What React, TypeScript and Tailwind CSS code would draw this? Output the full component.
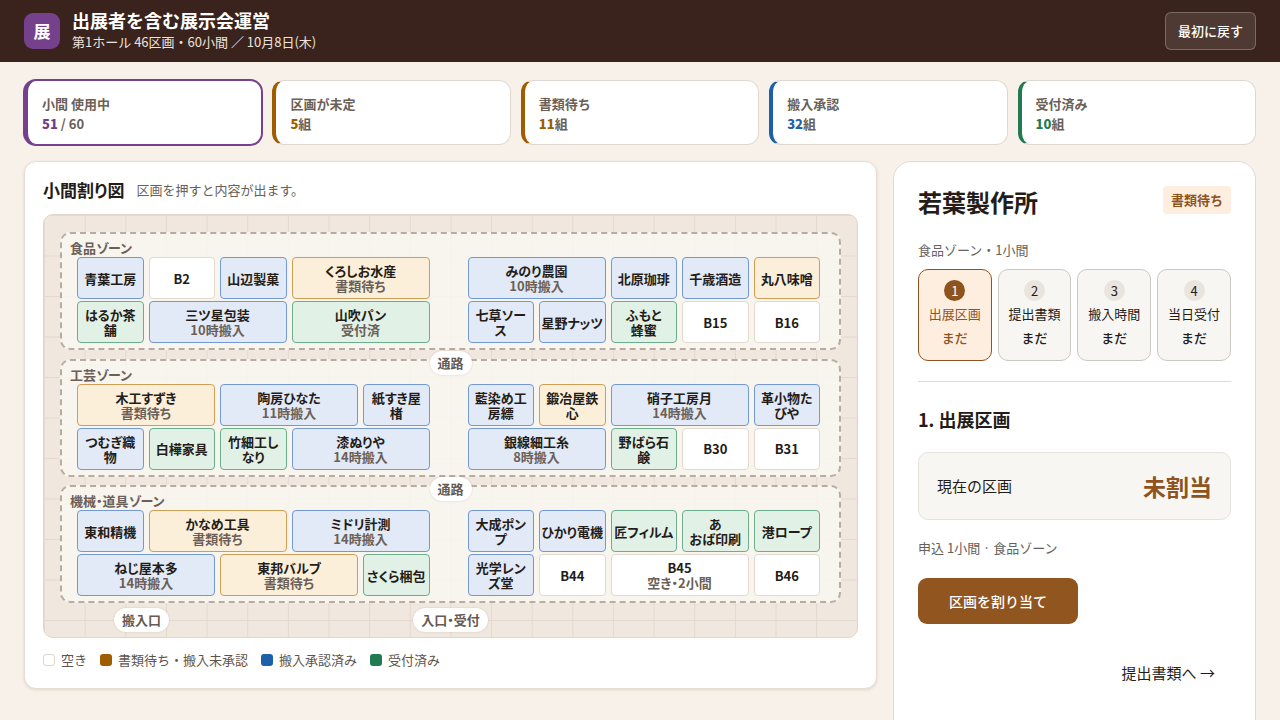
import { clsx } from 'clsx';

type Status = 'free' | 'wait' | 'ok' | 'done';
type Booth = { name: string; note?: string; status: Status; span?: number };
type Zone = { name: string; left: Booth[]; right: Booth[] };

const summary = [
  { label: '小間 使用中', num: '51', unit: ' / 60', bar: 'border-l-[#75408c]', text: 'text-[#6f3d8a]', active: true },
  { label: '区画が未定', num: '5', unit: '組', bar: 'border-l-[#a05c00]', text: 'text-[#a05c00]' },
  { label: '書類待ち', num: '11', unit: '組', bar: 'border-l-[#a05c00]', text: 'text-[#a05c00]' },
  { label: '搬入承認', num: '32', unit: '組', bar: 'border-l-[#1d5fa8]', text: 'text-[#1d5fa8]' },
  { label: '受付済み', num: '10', unit: '組', bar: 'border-l-[#217a50]', text: 'text-[#217a50]' },
];

const zones: Zone[] = [
  {
    name: '食品ゾーン',
    left: [
      { name: '青葉工房', status: 'ok' },
      { name: 'B2', status: 'free' },
      { name: '山辺製菓', status: 'ok' },
      { name: 'くろしお水産', note: '書類待ち', status: 'wait', span: 2 },
      { name: 'はるか茶\n舗', status: 'done' },
      { name: '三ツ星包装', note: '10時搬入', status: 'ok', span: 2 },
      { name: '山吹パン', note: '受付済', status: 'done', span: 2 },
    ],
    right: [
      { name: 'みのり農園', note: '10時搬入', status: 'ok', span: 2 },
      { name: '北原珈琲', status: 'ok' },
      { name: '千歳酒造', status: 'ok' },
      { name: '丸八味噌', status: 'wait' },
      { name: '七草ソー\nス', status: 'ok' },
      { name: '星野ナッツ', status: 'ok' },
      { name: 'ふもと\n蜂蜜', status: 'done' },
      { name: 'B15', status: 'free' },
      { name: 'B16', status: 'free' },
    ],
  },
  {
    name: '工芸ゾーン',
    left: [
      { name: '木工すずき', note: '書類待ち', status: 'wait', span: 2 },
      { name: '陶房ひなた', note: '11時搬入', status: 'ok', span: 2 },
      { name: '紙すき屋\n楮', status: 'ok' },
      { name: 'つむぎ織\n物', status: 'ok' },
      { name: '白樺家具', status: 'done' },
      { name: '竹細工し\nなり', status: 'done' },
      { name: '漆ぬりや', note: '14時搬入', status: 'ok', span: 2 },
    ],
    right: [
      { name: '藍染め工\n房縹', status: 'ok' },
      { name: '鍛冶屋鉄\n心', status: 'wait' },
      { name: '硝子工房月', note: '14時搬入', status: 'ok', span: 2 },
      { name: '革小物た\nびや', status: 'ok' },
      { name: '銀線細工糸', note: '8時搬入', status: 'ok', span: 2 },
      { name: '野ばら石\n鹸', status: 'done' },
      { name: 'B30', status: 'free' },
      { name: 'B31', status: 'free' },
    ],
  },
  {
    name: '機械・道具ゾーン',
    left: [
      { name: '東和精機', status: 'ok' },
      { name: 'かなめ工具', note: '書類待ち', status: 'wait', span: 2 },
      { name: 'ミドリ計測', note: '14時搬入', status: 'ok', span: 2 },
      { name: 'ねじ屋本多', note: '14時搬入', status: 'ok', span: 2 },
      { name: '東邦バルブ', note: '書類待ち', status: 'wait', span: 2 },
      { name: 'さくら梱包', status: 'done' },
    ],
    right: [
      { name: '大成ポン\nプ', status: 'ok' },
      { name: 'ひかり電機', status: 'ok' },
      { name: '匠フィルム', status: 'done' },
      { name: 'あ\nおば印刷', status: 'done' },
      { name: '港ロープ', status: 'done' },
      { name: '光学レン\nズ堂', status: 'ok' },
      { name: 'B44', status: 'free' },
      { name: 'B45', note: '空き・2小間', status: 'free', span: 2 },
      { name: 'B46', status: 'free' },
    ],
  },
];

const boothColor: Record<Status, string> = {
  free: 'bg-white border-[#e3d9cf]',
  wait: 'bg-[#fcefd9] border-[#cf9f56]',
  ok: 'bg-[#e2eaf7] border-[#7299d2]',
  done: 'bg-[#e1f1e6] border-[#6aae8b]',
};

const legend = [
  { label: '空き', color: 'bg-white border border-[#ddd5cc]' },
  { label: '書類待ち・搬入未承認', color: 'bg-[#a05c00]' },
  { label: '搬入承認済み', color: 'bg-[#1d5fa8]' },
  { label: '受付済み', color: 'bg-[#217a50]' },
];

const steps = ['出展区画', '提出書類', '搬入時間', '当日受付'];

// booth names and zone labels are set tight so five characters fit one booth
function BoothGrid({ booths }: { booths: Booth[] }) {
  return (
    <div className="grid flex-1 grid-cols-5 auto-rows-[42px] gap-x-[5px] gap-y-[2px]">
      {booths.map((b) => (
        <button
          key={b.name}
          type="button"
          className={clsx(
            'flex flex-col items-center justify-center rounded-[4px] border text-[13px] leading-[15px] font-bold whitespace-pre text-[#241c18]',
            boothColor[b.status],
            b.span === 2 && 'col-span-2',
          )}
        >
          <span>{b.name}</span>
          {b.note && <span className="text-[#6b5f57]">{b.note}</span>}
        </button>
      ))}
    </div>
  );
}

function Pill({ children, className }: { children: string; className?: string }) {
  return (
    <span className={clsx('rounded-full bg-white px-2 text-[13px] leading-6 font-bold whitespace-nowrap text-[#665a52] shadow-[0_0_2px_rgba(80,50,30,0.2)]', className)}>
      {children}
    </span>
  );
}

function FloorMap() {
  return (
    <div className="rounded-[10px] border border-[#e3d6c8] bg-[#f0e7de] bg-[linear-gradient(90deg,#e4d9ce_1px,transparent_1px),linear-gradient(#e4d9ce_1px,transparent_1px)] bg-size-[5%_9.6%] px-4 pt-[17px] pb-[5px] [font-feature-settings:'palt']">
      <div className="grid h-[371px] content-between">
        {zones.map((zone, i) => (
          <section key={zone.name} className="relative rounded-[10px] border-2 border-dashed border-[#b8aca2] bg-[#f9f6f1]/85 px-2 pt-[5px] pb-[5px]">
            {i > 0 && <Pill className="absolute -top-[10px] left-1/2 -translate-x-1/2">通路</Pill>}
            <h3 className="text-[13px] leading-[18px] font-bold text-[#6b5f57]">{zone.name}</h3>
            <div className="flex gap-[38px] pr-[11px] pl-[7px]">
              <BoothGrid booths={zone.left} />
              <BoothGrid booths={zone.right} />
            </div>
          </section>
        ))}
      </div>
      <div className="mt-[5px] grid grid-cols-[1fr_auto_1fr]">
        <div className="flex pl-[54px]">
          <Pill>搬入口</Pill>
        </div>
        <Pill>入口・受付</Pill>
      </div>
    </div>
  );
}

function DetailPanel() {
  return (
    <aside className="min-h-[640px] rounded-[18px] border border-[#dedad4] bg-white p-6">
      <div className="flex items-start justify-between">
        <h2 className="text-2xl leading-8 font-bold">若葉製作所</h2>
        <span className="rounded-[4px] bg-[#fdeee0] px-2 text-[13px] leading-7 font-bold text-[#8f531d]">書類待ち</span>
      </div>
      <p className="mt-[22px] text-[13px] leading-5 text-[#67645f]">食品ゾーン・1小間</p>
      <div className="mt-[9px] grid grid-cols-4 gap-[6px]">
        {steps.map((step, i) => (
          <button
            key={step}
            type="button"
            className={clsx(
              'flex flex-col items-center rounded-[10px] border py-[10px] text-[13px] leading-6',
              i === 0 ? 'border-[#8f531d] bg-[#fdeee0] text-[#8f531d]' : 'border-[#cbc8c2] bg-[#f8f6f3] text-[#241c18]',
            )}
          >
            <span className={clsx('mb-px size-[21px] rounded-full leading-[21px]', i === 0 ? 'bg-[#8f531d] text-white' : 'bg-[#e9e4de]')}>{i + 1}</span>
            <span>{step}</span>
            <span className="font-medium">まだ</span>
          </button>
        ))}
      </div>
      <div className="mt-5 border-t border-[#dedad4] pt-6">
        <h3 className="text-lg leading-[26px] font-bold">1. 出展区画</h3>
        <div className="mt-5 flex h-[68px] items-center justify-between rounded-[10px] border border-[#e6e2dd] bg-[#f8f6f3] px-[18px]">
          <span className="text-[15px]">現在の区画</span>
          <strong className="text-[23px] font-bold text-[#8f531d]">未割当</strong>
        </div>
        <p className="mt-[18px] text-[13px] leading-5 text-[#67605a]">申込 1小間 · 食品ゾーン</p>
        <button type="button" className="mt-5 h-[46px] w-40 rounded-[9px] bg-[#91561f] text-sm font-medium text-white">
          区画を割り当て
        </button>
        <div className="mt-[26px] flex justify-end">
          <button type="button" className="h-[46px] px-4 text-[15px]">提出書類へ →</button>
        </div>
      </div>
    </aside>
  );
}

export default function App() {
  return (
    <div className="min-h-screen bg-[#f7f1ea] font-['Noto_Sans_CJK_JP',sans-serif] text-[#241c18]">
      <header className="flex h-[62px] items-center gap-3 bg-[#3a231c] px-6 text-white">
        <div className="grid size-9 place-items-center rounded-[9px] bg-[#75408c] text-[17px] font-bold">展</div>
        <div>
          <h1 className="text-lg leading-[22px] font-bold">出展者を含む展示会運営</h1>
          <p className="text-[13px] leading-[22px] text-[#eee4dc]">第1ホール 46区画・60小間 ／ 10月8日(木)</p>
        </div>
        <button type="button" className="ml-auto h-[38px] rounded-md border border-white/25 bg-white/10 px-3 text-[13px] font-medium">
          最初に戻す
        </button>
      </header>
      <main className="px-6 pt-[18px] pb-6">
        <div className="grid grid-cols-5 gap-[10px]">
          {summary.map((s) => (
            <button
              key={s.label}
              type="button"
              className={clsx(
                'rounded-[12px] border border-l-4 bg-white px-[14px] pt-[13px] pb-[10px] text-left text-[13px] leading-5 font-bold whitespace-pre text-[#6b5f57]',
                s.bar,
                s.active ? 'border-[#75408c] shadow-[0_0_0_1px_#75408c]' : 'border-y-[#dfd8d0] border-r-[#dfd8d0]',
              )}
            >
              <span className="block">{s.label}</span>
              <span className="block"><b className={s.text}>{s.num}</b>{s.unit}</span>
            </button>
          ))}
        </div>
        <div className="mt-4 grid grid-cols-[minmax(0,2.35fr)_minmax(0,1fr)] items-start gap-4">
          <section className="rounded-[12px] border border-[#e5ddd0] bg-white p-[18px] shadow-[0_1px_3px_rgba(80,60,30,0.15)]">
            <div className="mb-[14px] flex items-center gap-3 leading-5">
              <h2 className="text-[17px] font-bold [font-feature-settings:'palt']">小間割り図</h2>
              <p className="text-[13px] text-[#6b5f57]">区画を押すと内容が出ます。</p>
            </div>
            <FloorMap />
            <div className="mt-3 flex gap-[13px] text-[13px] leading-5 text-[#5f544d]">
              {legend.map((l) => (
                <span key={l.label} className="flex items-center gap-[6px]">
                  <i className={clsx('size-3 rounded-[3px]', l.color)} />
                  {l.label}
                </span>
              ))}
            </div>
          </section>
          <DetailPanel />
        </div>
      </main>
    </div>
  );
}
